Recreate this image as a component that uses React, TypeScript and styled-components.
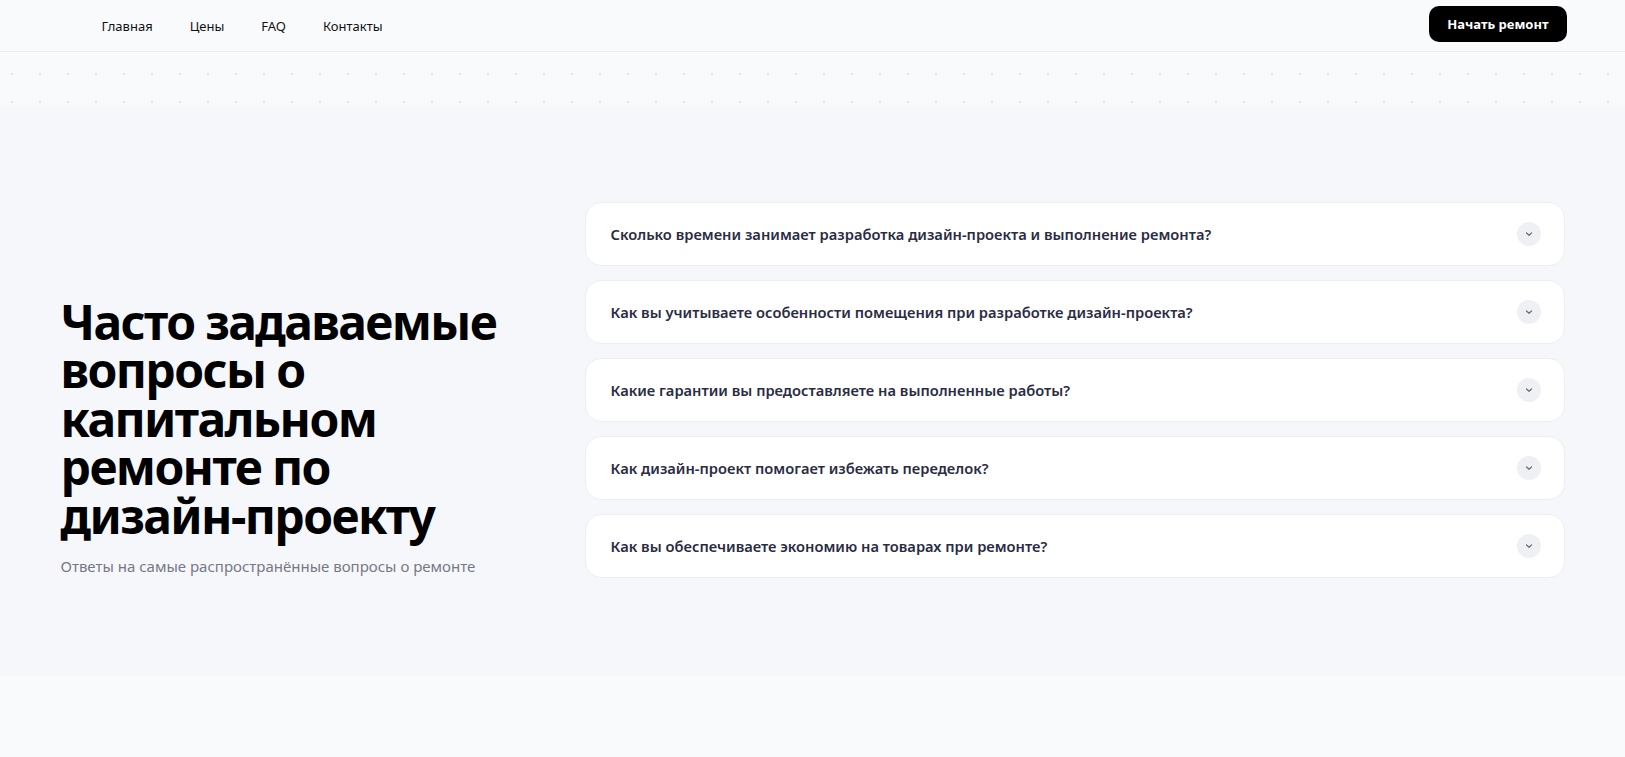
import React from 'react';
import styled, { createGlobalStyle } from 'styled-components';

const GlobalStyle = createGlobalStyle`
  * {
    box-sizing: border-box;
  }

  body {
    margin: 0;
    background-color: #f9fafc;
    font-family: 'Noto Sans', 'Open Sans', sans-serif;
    color: #111111;
  }
`;

const Header = styled.header`
  height: 52px;
  border-bottom: 1px solid #eceef4;
  background-color: #f9fafc;
`;

const HeaderInner = styled.div`
  display: flex;
  align-items: center;
  justify-content: space-between;
  width: 1504px;
  height: 100%;
  margin: 0 auto;
  padding-left: 41px;
`;

const Nav = styled.nav`
  display: flex;
  align-items: center;
  gap: 37px;
`;

const NavLink = styled.a`
  font-size: 13px;
  color: #111111;
  text-decoration: none;
  cursor: pointer;
`;

const StartButton = styled.button`
  height: 36px;
  padding: 0 18px;
  border: none;
  border-radius: 10px;
  background-color: #000000;
  color: #ffffff;
  font-family: 'Noto Sans', sans-serif;
  font-size: 13px;
  font-weight: 700;
  cursor: pointer;
  margin-top: -4px;
  margin-right: -2px;
`;

const DotBand = styled.div`
  height: 54px;
  background-color: #f9fafc;
  background-image: radial-gradient(circle, #dfe1ee 1px, transparent 1.3px);
  background-size: 28px 28px;
  background-position: -2px 8px;
`;

const Section = styled.section`
  background-color: #f6f7fb;
  padding: 96px 0 98px;
`;

const SectionInner = styled.div`
  display: grid;
  grid-template-columns: 476px 1fr;
  column-gap: 48px;
  align-items: end;
  width: 1504px;
  margin: 0 auto;
`;

const Intro = styled.div`
  display: flex;
  flex-direction: column;
  gap: 14px;
`;

const Title = styled.h2`
  margin: 0;
  font-size: 48px;
  line-height: 48.5px;
  font-weight: 700;
  color: #000000;
  letter-spacing: -1.6px;
`;

const NoWrap = styled.span`
  white-space: nowrap;
`;

const Subtitle = styled.p`
  margin: 0;
  font-size: 15px;
  line-height: 24px;
  color: #767886;
`;

const List = styled.div`
  display: flex;
  flex-direction: column;
  gap: 14px;
`;

const Item = styled.div`
  display: flex;
  align-items: center;
  justify-content: space-between;
  height: 64px;
  padding: 0 23px 0 25px;
  border: 1px solid #eceef3;
  border-radius: 16px;
  background-color: #ffffff;
  cursor: pointer;
`;

const Question = styled.span`
  font-size: 14.7px;
  font-weight: 600;
  color: #2a2c44;
`;

const Toggle = styled.span`
  display: flex;
  align-items: center;
  justify-content: center;
  width: 24px;
  height: 24px;
  border-radius: 50%;
  background-color: #eff0f4;
`;

const questions = [
  'Сколько времени занимает разработка дизайн-проекта и выполнение ремонта?',
  'Как вы учитываете особенности помещения при разработке дизайн-проекта?',
  'Какие гарантии вы предоставляете на выполненные работы?',
  'Как дизайн-проект помогает избежать переделок?',
  'Как вы обеспечиваете экономию на товарах при ремонте?',
];

const Chevron = () => (
  <svg width='8' height='6' viewBox='0 0 8 6' fill='none'>
    <path
      d='M1.5 2 L4 4.3 L6.5 2'
      stroke='#6a6d7c'
      strokeWidth='1.2'
      strokeLinecap='round'
      strokeLinejoin='round'
    />
  </svg>
);

const App: React.FC = () => {
  return (
    <>
      <GlobalStyle />
      <Header>
        <HeaderInner>
          <Nav>
            <NavLink>Главная</NavLink>
            <NavLink>Цены</NavLink>
            <NavLink>FAQ</NavLink>
            <NavLink>Контакты</NavLink>
          </Nav>
          <StartButton>Начать ремонт</StartButton>
        </HeaderInner>
      </Header>
      <DotBand />
      <Section>
        <SectionInner>
          <Intro>
            <Title>
              Часто задаваемые вопросы о капитальном ремонте по <NoWrap>дизайн-проекту</NoWrap>
            </Title>
            <Subtitle>Ответы на самые распространённые вопросы о ремонте</Subtitle>
          </Intro>
          <List>
            {questions.map((question) => (
              <Item key={question}>
                <Question>{question}</Question>
                <Toggle>
                  <Chevron />
                </Toggle>
              </Item>
            ))}
          </List>
        </SectionInner>
      </Section>
    </>
  );
};

export default App;
